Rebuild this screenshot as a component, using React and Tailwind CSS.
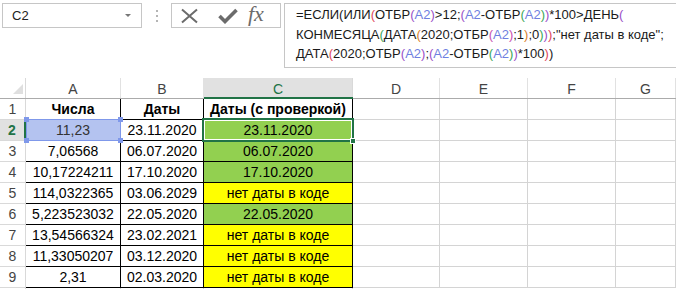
import React from "react";

const K = "#1a1a1a";
const REF = "#6f7fe0";
const P2 = "#e0475c";
const P3 = "#9a4fc7";
const P4 = "#3aa657";
const P5 = "#d9822b";
const P6 = "#c84fb0";

const lines = [
  [["=ЕСЛИ(", K], ["ИЛИ", K], ["(", P2], ["ОТБР", K], ["(", P3], ["A2", REF], [")", P3], [">12;", K], ["(", P3], ["A2", REF], ["-ОТБР", K], ["(", P4], ["A2", REF], [")", P4], [")", P3], ["*100>ДЕНЬ", K], ["(", P3]],
  [["КОНМЕСЯЦА", K], ["(", P4], ["ДАТА", K], ["(", P5], ["2020;ОТБР", K], ["(", P6], ["A2", REF], [")", P6], [";1", K], [")", P5], [";0", K], [")", P4], [")", P3], [")", P2], [';"нет даты в коде";', K]],
  [["ДАТА", K], ["(", P2], ["2020;ОТБР", K], ["(", P3], ["A2", REF], [")", P3], [";", K], ["(", P3], ["A2", REF], ["-ОТБР", K], ["(", P4], ["A2", REF], [")", P4], [")", P3], ["*100", K], [")", P2], [")", K]],
];

const rows = [
  ["11,23", "23.11.2020", "23.11.2020", "g"],
  ["7,06568", "06.07.2020", "06.07.2020", "g"],
  ["10,17224211", "17.10.2020", "17.10.2020", "g"],
  ["114,0322365", "03.06.2029", "нет даты в коде", "y"],
  ["5,223523032", "22.05.2020", "22.05.2020", "g"],
  ["13,54566324", "23.02.2021", "нет даты в коде", "y"],
  ["11,33050207", "03.12.2020", "нет даты в коде", "y"],
  ["2,31", "02.03.2020", "нет даты в коде", "y"],
];

function TopBar() {
  return (
    <div className="h-[78px] flex items-start pt-[3px] font-['Liberation_Sans',sans-serif]">
      <div className="ml-[2px] w-[140px] h-[25px] border border-[#c6c6c6] flex items-center justify-between pl-[9px] pr-[10px] text-[13px] text-[#222]">
        <span>C2</span>
        <span className="w-0 h-0 border-l-[3px] border-r-[3px] border-t-[3px] border-l-transparent border-r-transparent border-t-[#777]" />
      </div>
      <div className="w-[29px] h-[25px] flex flex-col items-center justify-center gap-[3px]">
        <span className="w-[2px] h-[2px] bg-[#b5b5b5]" />
        <span className="w-[2px] h-[2px] bg-[#b5b5b5]" />
        <span className="w-[2px] h-[2px] bg-[#b5b5b5]" />
      </div>
      <div className="w-[110px] h-[25px] border border-[#c6c6c6] flex items-center">
        <svg width="20" height="16" viewBox="0 0 20 16" className="ml-[8px]">
          <path d="M2 1.5 L17 14.5 M17 1.5 L2 14.5" stroke="#6b6b6b" strokeWidth="2" fill="none" />
        </svg>
        <svg width="20" height="16" viewBox="0 0 20 16" className="ml-[18px]">
          <path d="M1.5 8 L7 13.5 L18.5 2" stroke="#6b6b6b" strokeWidth="3.6" fill="none" strokeLinejoin="miter" />
        </svg>
        <span className="ml-[10px] font-['Liberation_Serif',serif] italic text-[22px] leading-none text-[#6b6b6b] -mt-[4px]">fx</span>
      </div>
      <div className="ml-[3px] flex-1 h-[65px] border border-r-0 border-[#c6c6c6] pl-[11px] pt-[1px] text-[13px] leading-[19.7px] whitespace-nowrap overflow-hidden">
        {lines.map((ln, i) => (
          <div key={i}>
            {ln.map(([t, c], j) => (
              <span key={j} style={{ color: c }}>{t}</span>
            ))}
          </div>
        ))}
      </div>
    </div>
  );
}

const colW = ["w-[26px]", "w-[95px]", "w-[83px]", "w-[149px]", "w-[87px]", "w-[88px]", "w-[88px]", "flex-1"];

function Grid() {
  const letters = ["A", "B", "C", "D", "E", "F", "G"];
  return (
    <div className="relative font-['Liberation_Sans',sans-serif] text-[14px] text-black">
      <div className="flex h-[21px] border-b border-[#ababab]">
        <div className="w-[26px] h-full border-r border-[#d9d9d9] relative">
          <div className="absolute right-[2px] bottom-[4px] w-0 h-0 border-l-[10px] border-t-[10px] border-l-transparent border-t-transparent border-r-0 border-b-[10px] border-b-[#dfdfdf]" />
        </div>
        {letters.map((l, i) => (
          <div
            key={l}
            className={`${colW[i + 1]} h-full border-r flex items-center justify-center pt-[2px] ${l === "C" ? "bg-[#e1e1e1] text-[#217346] border-[#d9d9d9]" : "text-[#444] border-[#e1e1e1]"}`}
          >
            {l}
          </div>
        ))}
      </div>
      <div className="absolute left-[204px] top-[19px] w-[149px] h-[2px] bg-[#217346]" />
      <div className="flex h-[21px]">
        <div className="w-[26px] border-r border-b border-[#d9d9d9] flex items-center justify-center text-[#444] pt-[1px]">1</div>
        <div className="w-[95px] border-r border-b border-black flex items-center justify-center font-bold pt-[1px]">Числа</div>
        <div className="w-[83px] border-r border-b border-black flex items-center justify-center font-bold pt-[1px]">Даты</div>
        <div className="w-[149px] border-r border-b border-black flex items-center justify-center font-bold pt-[1px]">Даты (с проверкой)</div>
        {[1, 2, 3, 4].map((k) => (
          <div key={k} className={`${colW[k + 3]} border-r border-b border-[#d4d4d4]`} />
        ))}
      </div>
      {rows.map((r, i) => {
        const n = i + 2;
        const sel = n === 2;
        return (
          <div key={n} className="flex h-[21px]">
            <div className={`w-[26px] border-b flex items-center justify-center pt-[1px] ${sel ? "bg-[#e1e1e1] text-[#217346] font-bold border-r-2 border-r-[#217346] border-b-[#d9d9d9]" : "border-r border-[#d9d9d9] text-[#444]"}`}>{n}</div>
            <div className={`w-[95px] border-r border-b border-black flex items-center justify-center pt-[1px] ${sel ? "bg-[#b4c3f0] text-[#333]" : ""}`}>{r[0]}</div>
            <div className="w-[83px] border-r border-b border-black flex items-center justify-center pt-[1px]">{r[1]}</div>
            <div className={`w-[149px] border-r border-b border-black flex items-center justify-center pt-[1px] ${r[3] === "g" ? "bg-[#92d050]" : "bg-[#ffff00]"}`}>{r[2]}</div>
            {[1, 2, 3, 4].map((k) => (
              <div key={k} className={`${colW[k + 3]} border-r border-b border-[#d4d4d4]`} />
            ))}
          </div>
        );
      })}
      <div className="flex h-[21px]">
        <div className="w-[26px] border-r border-[#d9d9d9]" />
        <div className="w-[95px] border-r border-[#d4d4d4]" />
        <div className="w-[83px] border-r border-[#d4d4d4]" />
        <div className="w-[149px] border-r border-[#d4d4d4]" />
      </div>
      <div className="absolute left-[26px] top-[41px] w-[95px] h-[22px] border border-[#7f98ea] pointer-events-none">
        <div className="absolute -left-[3px] -top-[3px] w-[5px] h-[5px] bg-[#7f98ea]" />
        <div className="absolute -right-[3px] -top-[3px] w-[5px] h-[5px] bg-[#7f98ea]" />
        <div className="absolute -left-[3px] -bottom-[3px] w-[5px] h-[5px] bg-[#7f98ea]" />
        <div className="absolute -right-[3px] -bottom-[3px] w-[5px] h-[5px] bg-[#7f98ea]" />
      </div>
      <div className="absolute left-[202px] top-[40px] w-[152px] h-[24px] border-2 border-[#217346] shadow-[inset_0_0_0_1px_#ffffff] pointer-events-none">
        <div className="absolute -right-[4px] -bottom-[4px] w-[6px] h-[6px] bg-[#217346] border border-white" />
      </div>
    </div>
  );
}

export default function App() {
  return (
    <div className="w-[676px] h-[289px] bg-white overflow-hidden">
      <TopBar />
      <Grid />
    </div>
  );
}
